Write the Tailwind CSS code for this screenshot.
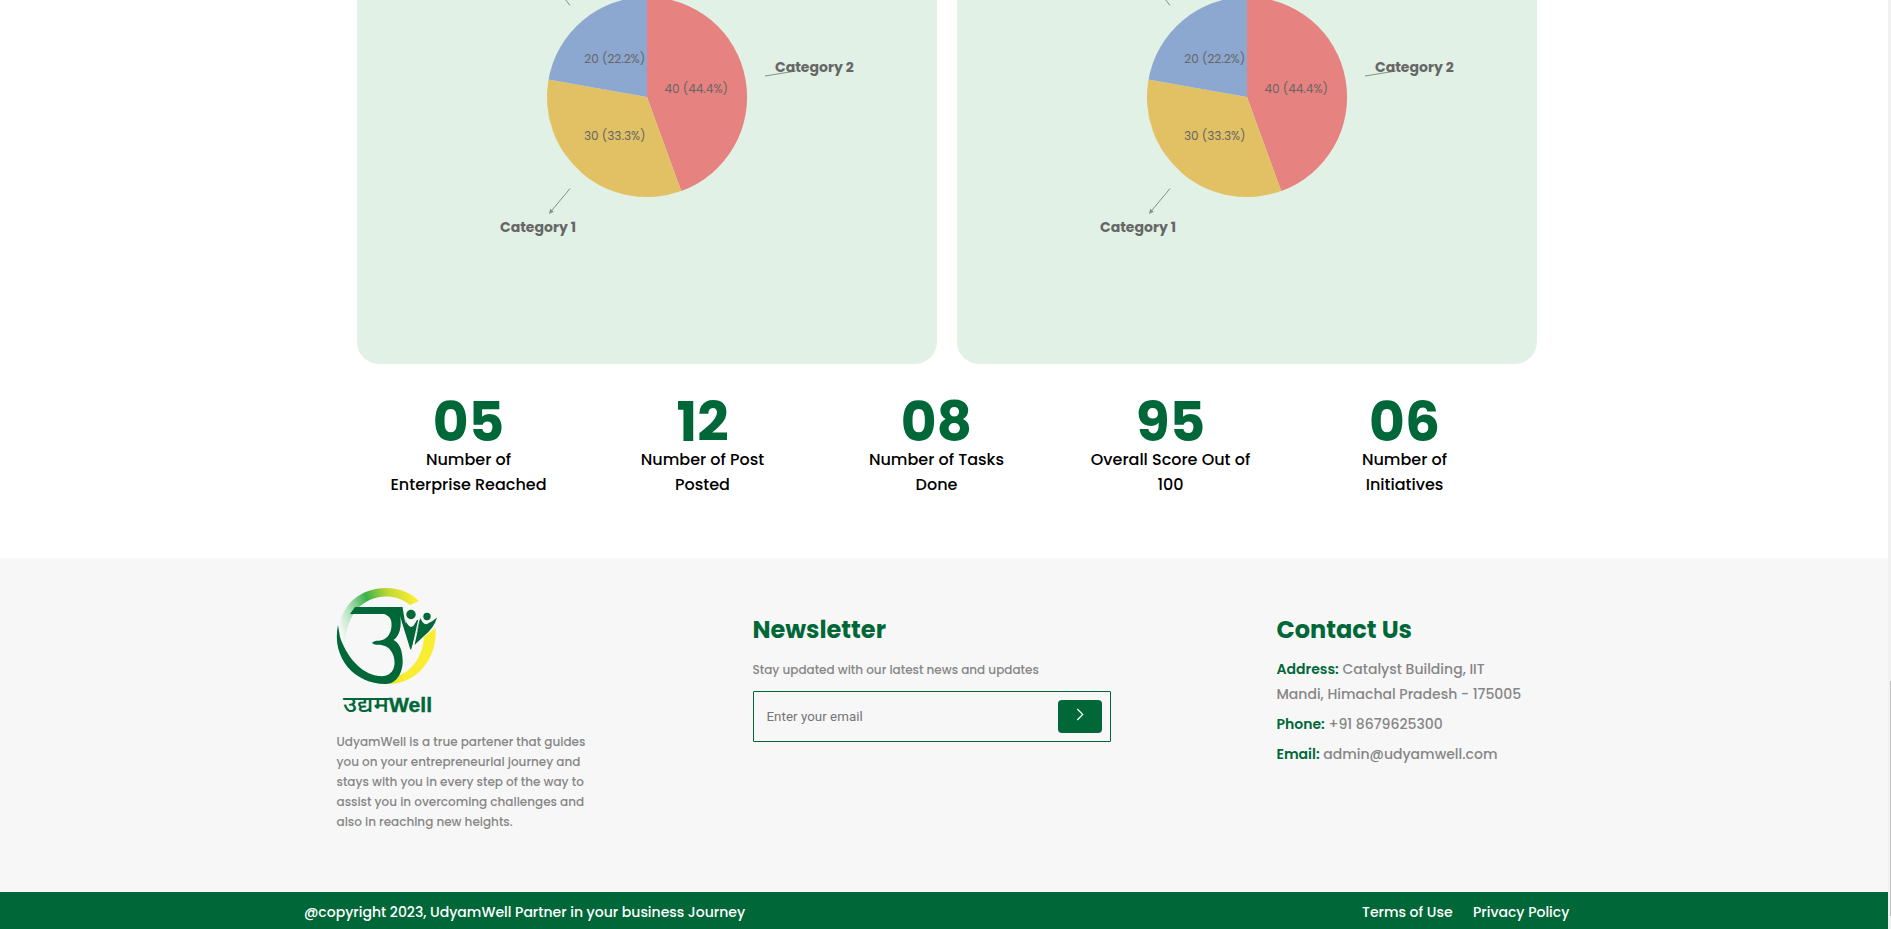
<!DOCTYPE html>
<html lang="en">
<head>
<meta charset="utf-8">
<title>UdyamWell</title>
<script src="https://cdn.jsdelivr.net/npm/@tailwindcss/browser@4"></script>
</head>
<body class="relative h-[929px] overflow-hidden bg-white font-['Poppins','Inter',sans-serif]">

<svg class="hidden">
  <symbol id="pie" viewBox="0 0 580 364">
    <path d="M290 97V-3A100 100 0 0 1 324.2 191Z" fill="#e6827f"/>
    <path d="M290 97L324.2 191A100 100 0 0 1 191.5 79.6Z" fill="#e1c164"/>
    <path d="M290 97L191.5 79.6A100 100 0 0 1 290 -3Z" fill="#8ca8d0"/>
    <g stroke="#84918a" stroke-width="1" fill="none">
      <path d="M213 5.500L208 -1M213 188.500L193.500 212M408 76L439 71"/>
    </g>
    <path d="M192 214L193.200 208.800L196.800 211.800Z" fill="#84918a"/>
    <g font-size="12" fill="#666">
      <text x="227.300" y="63">20 (22.2%)</text>
      <text x="307.500" y="93">40 (44.4%)</text>
      <text x="227" y="140">30 (33.3%)</text>
    </g>
    <g font-size="14" font-weight="700" fill="#666">
      <text x="418" y="72">Category 2</text>
      <text x="143" y="232">Category 1</text>
    </g>
  </symbol>
</svg>

<main class="h-[558px] pl-[357px]">
  <section class="flex gap-5">
    <div class="h-[364px] w-[580px] overflow-hidden rounded-b-[22px] bg-[#e1f1e5]"><svg class="h-full w-full"><use href="#pie"/></svg></div>
    <div class="h-[364px] w-[580px] overflow-hidden rounded-b-[22px] bg-[#e1f1e5]"><svg class="h-full w-full"><use href="#pie"/></svg></div>
  </section>
  <section class="-ml-[5.500px] mt-[31px] grid w-[1170px] grid-cols-5 whitespace-nowrap text-center text-base font-medium leading-[25px] text-black">
    <div><p class="h-[52px] text-[55px] font-bold leading-[54px] text-[#006838]">05</p><p>Number of</p><p>Enterprise Reached</p></div>
    <div><p class="h-[52px] text-[55px] font-bold leading-[54px] text-[#006838]">12</p><p>Number of Post</p><p>Posted</p></div>
    <div><p class="h-[52px] text-[55px] font-bold leading-[54px] text-[#006838]">08</p><p>Number of Tasks</p><p>Done</p></div>
    <div><p class="h-[52px] text-[55px] font-bold leading-[54px] text-[#006838]">95</p><p>Overall Score Out of</p><p>100</p></div>
    <div><p class="h-[52px] text-[55px] font-bold leading-[54px] text-[#006838]">06</p><p>Number of</p><p>Initiatives</p></div>
  </section>
</main>

<footer class="whitespace-nowrap">
  <div class="flex h-[334px] bg-[#f7f7f7] font-medium text-[#868686]">
    <div class="ml-[336px] mt-3 w-[416.500px]">
      <svg class="-ml-4 block h-[150px] w-[140px]" viewBox="0 0 140 150">
        <defs>
          <linearGradient id="ring" gradientUnits="userSpaceOnUse" x1="20" y1="60" x2="100" y2="34">
            <stop offset="0" stop-color="#f7f7f7"/><stop offset=".15" stop-color="#bfe6c8"/><stop offset=".42" stop-color="#3bb14a"/><stop offset=".68" stop-color="#bfd833"/><stop offset=".95" stop-color="#f9ed32"/>
          </linearGradient>
          <linearGradient id="crescent" gradientUnits="userSpaceOnUse" x1="70" y1="100" x2="86" y2="103">
            <stop offset="0" stop-color="#dfe026"/><stop offset="1" stop-color="#f9ed32"/>
          </linearGradient>
        </defs>
        <path d="M18.500 60C21 34 41 18 66 18C80 18 91 23 99 31L90 35C83 29 75 26.500 65 26.500C44 27 27 43 25 72C21 69 18.500 65 18.500 60Z" fill="url(#ring)"/>
        <path d="M115.500 58C118 87 98 113 70 114L78 106C94 100 103 84 104 67Z" fill="url(#crescent)"/>
        <path d="M18 55C11 89 36 114.500 66 114C77 114 84 101 82.500 88C82 78 78 72 73.500 70C80 66 82 55 80 46L90.500 80L101 50L97 50L91 60L85 52L82.500 37H35L30 44H64C70 46 72 50 71.500 56C71 64 67 69.500 60 70.500C57 71 54 70.500 52 73C56 76 60 74 65 76C72 79 75 87 74.500 94C74 103 67 107 59 106C40 104 26 85 20 67Z" fill="#006838"/>
        <path d="M83.500 45Q86 55 91 57Q97 55 100.500 47L96 60L91 80L90 67Z" fill="#006838"/>
        <path d="M94.500 75L100.500 48Q103 55 107 54Q112 52 117 47.500Q114 58 104 66Z" fill="#006838"/>
        <path d="M99.500 47L93.500 74" stroke="#f7f7f7" stroke-width="1.300"/>
        <circle cx="91" cy="44.500" r="6.300" fill="#f7f7f7"/><circle cx="91" cy="44.500" r="4.700" fill="#006838"/>
        <circle cx="107" cy="46.500" r="3.700" fill="#006838"/>
        <text x="23" y="141.500" font-size="21.500" font-weight="500" fill="#006838" textLength="46" lengthAdjust="spacingAndGlyphs" font-family="'Noto Sans Devanagari','Noto Sans',sans-serif">उद्यम</text>
        <text x="69" y="142" font-size="20.500" font-weight="700" fill="#006838" stroke="#006838" stroke-width=".4" textLength="43" lengthAdjust="spacingAndGlyphs" font-family="'Liberation Sans',sans-serif">Well</text>
      </svg>
      <p class="ml-[0.5px] mt-3 text-xs leading-5">UdyamWell is a true partener that guides<br>you on your entrepreneurial journey and<br>stays with you in every step of the way to<br>assist you in overcoming challenges and<br>also in reaching new heights.</p>
    </div>
    <div class="mt-[54px] w-[524px]">
      <h2 class="text-2xl font-bold leading-9 text-[#006838]">Newsletter</h2>
      <p class="mt-3 text-xs leading-5">Stay updated with our latest news and updates</p>
      <div class="mt-[11px] flex h-[51px] w-[358px] items-center justify-between rounded-[1px] border border-[#006838] pl-[13px] pr-2">
        <span class="font-['Roboto'] text-[13.300px] font-normal tracking-[0.05px] text-[#757575]">Enter your email</span>
        <span class="flex h-[33px] w-11 justify-center rounded bg-[#006838] pt-2">
          <svg class="h-[13px] w-2" viewBox="0 0 8 13" fill="none" stroke="#fff" stroke-width="1.200"><path d="M1.300 1L6.700 6.500L1.300 12"/></svg>
        </span>
      </div>
    </div>
    <div class="mt-[54px] text-sm leading-[25px]">
      <h2 class="text-2xl font-bold leading-9 text-[#006838]">Contact Us</h2>
      <p class="mt-[9px]"><b class="font-semibold text-[#006838]">Address:</b> Catalyst Building, IIT<br>Mandi, Himachal Pradesh - 175005</p>
      <p class="mt-[5px]"><b class="font-semibold text-[#006838]">Phone:</b> +91 8679625300</p>
      <p class="mt-[5px]"><b class="font-semibold text-[#006838]">Email:</b> admin@udyamwell.com</p>
    </div>
  </div>
  <div class="flex h-[37px] bg-[#006838] pl-[304px] pt-0.5 text-sm font-medium leading-[37px] text-white">
    <p class="w-[1058px]">@copyright 2023, UdyamWell Partner in your business Journey</p>
    <p class="w-[111px]">Terms of Use</p>
    <p>Privacy Policy</p>
  </div>
</footer>

<div class="absolute right-0 top-0 h-full w-[3px] bg-[#f1f1f1]"><div class="ml-auto mt-[681px] h-[235px] w-px bg-[#c1c1c1]"></div></div>
</body>
</html>
